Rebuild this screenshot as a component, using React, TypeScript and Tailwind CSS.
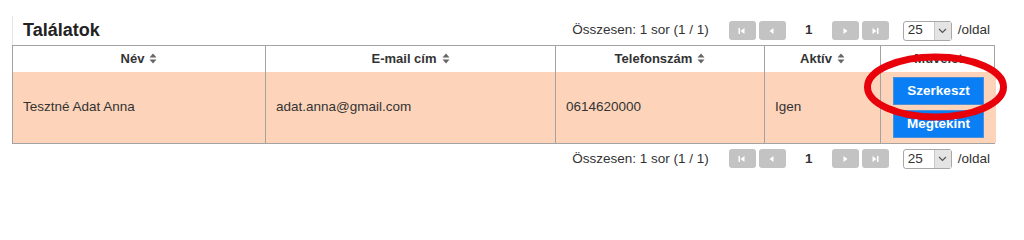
import React from "react";

const font = { fontFamily: '"Liberation Sans", Arial, sans-serif' };

function SortIcon() {
  return (
    <svg width="8" height="11" viewBox="0 0 8 11" className="inline-block ml-[5px] -mt-[2px]">
      <path d="M4 0.5 L7.5 4.5 L0.5 4.5 Z" fill="#666" />
      <path d="M4 10.5 L7.5 6.5 L0.5 6.5 Z" fill="#666" />
    </svg>
  );
}

function PagerButton({ kind }: { kind: "first" | "prev" | "next" | "last" }) {
  return (
    <span className="flex h-[19px] w-[27px] items-center justify-center rounded-[3px] bg-[#c3c3c3]">
      <svg width="10" height="8" viewBox="0 0 10 8">
        {kind === "first" && (
          <>
            <rect x="1.5" y="1" width="1.5" height="6" fill="#fff" />
            <path d="M7.5 1 L7.5 7 L3.5 4 Z" fill="#fff" />
          </>
        )}
        {kind === "prev" && <path d="M6.5 1 L6.5 7 L2.5 4 Z" fill="#fff" />}
        {kind === "next" && <path d="M3.5 1 L3.5 7 L7.5 4 Z" fill="#fff" />}
        {kind === "last" && (
          <>
            <path d="M2.5 1 L2.5 7 L6.5 4 Z" fill="#fff" />
            <rect x="7" y="1" width="1.5" height="6" fill="#fff" />
          </>
        )}
      </svg>
    </span>
  );
}

function Pager() {
  return (
    <div className="flex items-center text-[13.5px] text-[#333]">
      <span className="mr-[20px]">Összesen: 1 sor (1 / 1)</span>
      <div className="flex items-center gap-[3px]">
        <PagerButton kind="first" />
        <PagerButton kind="prev" />
      </div>
      <span className="w-[46px] text-center font-bold">1</span>
      <div className="flex items-center gap-[3px]">
        <PagerButton kind="next" />
        <PagerButton kind="last" />
      </div>
      <div className="ml-[14px] flex h-[20px] w-[49px] items-center rounded-[3px] border border-[#a8a8a8] bg-white">
        <span className="flex-1 pl-[4px] text-[13.5px]">25</span>
        <span className="flex h-full w-[17px] items-center justify-center border-l border-[#c8c8c8] bg-[#e4e4e4]">
          <svg width="9" height="6" viewBox="0 0 9 6">
            <path d="M1 1 L4.5 4.5 L8 1" stroke="#555" strokeWidth="1.2" fill="none" />
          </svg>
        </span>
      </div>
      <span className="ml-[6px]">/oldal</span>
    </div>
  );
}

const columns = ["Név", "E-mail cím", "Telefonszám", "Aktív"];
const row = ["Tesztné Adat Anna", "adat.anna@gmail.com", "0614620000", "Igen"];

export default function App() {
  return (
    <div className="h-[214px] w-[1024px] bg-white" style={font}>
      <div className="relative ml-[12px] w-[983px] pt-[16px]">
        <div className="flex h-[29px] items-center justify-between border-l border-[#e6e6e6] pl-[10px] pr-[5px]">
          <h2 className="text-[18px] font-bold text-[#222]">Találatok</h2>
          <Pager />
        </div>
        <div className="grid grid-cols-[252px_290px_209px_116px_116px] border border-[#a3a3a3] text-[13.5px] text-[#333]">
          {columns.map((c, i) => (
            <div
              key={c}
              className={`flex h-[26px] items-center justify-center text-[13px] font-bold ${i > 0 ? "border-l border-[#a3a3a3]" : ""}`}
            >
              {c}
              <SortIcon />
            </div>
          ))}
          <div className="flex h-[26px] items-center justify-center border-l border-[#a3a3a3] text-[13px] font-bold">
            Művelet
          </div>
          {row.map((v, i) => (
            <div
              key={v}
              className={`flex h-[71px] items-center bg-[#fdd4ba] pl-[10px] ${i > 0 ? "border-l border-[#a3a3a3]" : ""}`}
            >
              {v}
            </div>
          ))}
          <div className="flex h-[71px] flex-col items-center justify-center gap-[5px] border-l border-[#a3a3a3] bg-[#fdd4ba]">
            <button className="h-[28px] w-[91px] border border-[#4a90d9] bg-[#0a7ff5] text-[13.5px] font-bold text-white">
              Szerkeszt
            </button>
            <button className="h-[28px] w-[91px] border border-[#4a90d9] bg-[#0a7ff5] text-[13.5px] font-bold text-white">
              Megtekint
            </button>
          </div>
        </div>
        <div className="flex h-[25px] items-end justify-end pr-[5px]">
          <Pager />
        </div>
        <svg
          className="pointer-events-none absolute left-[851px] top-[51px]"
          width="145"
          height="72"
          viewBox="0 0 145 72"
        >
          <ellipse cx="72.5" cy="36" rx="68" ry="30" fill="none" stroke="#e8000b" strokeWidth="7" />
        </svg>
      </div>
    </div>
  );
}
